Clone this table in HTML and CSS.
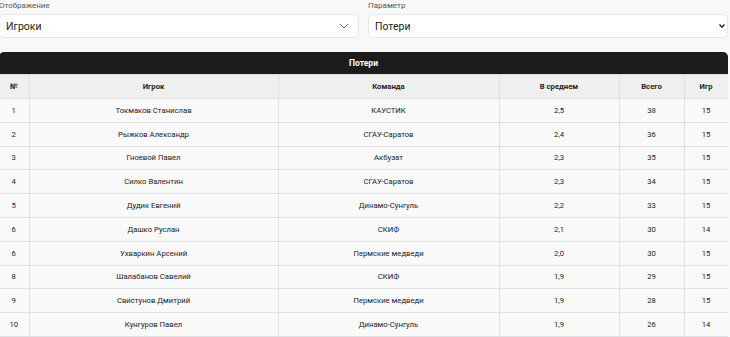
FILE: index.html
```html
<!DOCTYPE html>
<html lang="ru">
<head>
<meta charset="utf-8">
<link rel="stylesheet" href="styles.css">
</head>
<body>
<div class="page">
  <div class="filters">
    <div class="field">
      <div class="label">Отображение</div>
      <div class="select">
        <span>Игроки</span>
        <svg class="chev" width="10" height="6" viewBox="0 0 10 6"><path d="M1 1 L5 5 L9 1" fill="none" stroke="#666" stroke-width="1"/></svg>
      </div>
    </div>
    <div class="field">
      <div class="label">Параметр</div>
      <div class="select">
        <span>Потери</span>
        <svg class="chev2" width="6" height="4" viewBox="0 0 6 4"><path d="M0.5 0.5 L3 3.2 L5.5 0.5" fill="none" stroke="#222" stroke-width="1.4"/></svg>
      </div>
    </div>
  </div>
  <div class="card">
    <div class="title">Потери</div>
    <table class="stats">
      <colgroup>
        <col class="c1"><col class="c2"><col class="c3"><col class="c4"><col class="c5"><col class="c6">
      </colgroup>
      <thead>
        <tr><th>№</th><th>Игрок</th><th>Команда</th><th>В среднем</th><th>Всего</th><th>Игр</th></tr>
      </thead>
      <tbody>
        <tr><td>1</td><td>Токмаков Станислав</td><td>КАУСТИК</td><td>2,5</td><td>38</td><td>15</td></tr>
        <tr><td>2</td><td>Рыжков Александр</td><td>СГАУ-Саратов</td><td>2,4</td><td>36</td><td>15</td></tr>
        <tr><td>3</td><td>Гноевой Павел</td><td>Акбузат</td><td>2,3</td><td>35</td><td>15</td></tr>
        <tr><td>4</td><td>Силко Валентин</td><td>СГАУ-Саратов</td><td>2,3</td><td>34</td><td>15</td></tr>
        <tr><td>5</td><td>Дудик Евгений</td><td>Динамо-Сунгуль</td><td>2,2</td><td>33</td><td>15</td></tr>
        <tr><td>6</td><td>Дашко Руслан</td><td>СКИФ</td><td>2,1</td><td>30</td><td>14</td></tr>
        <tr><td>6</td><td>Ухваркин Арсений</td><td>Пермские медведи</td><td>2,0</td><td>30</td><td>15</td></tr>
        <tr><td>8</td><td>Шалабанов Савелий</td><td>СКИФ</td><td>1,9</td><td>29</td><td>15</td></tr>
        <tr><td>9</td><td>Свистунов Дмитрий</td><td>Пермские медведи</td><td>1,9</td><td>28</td><td>15</td></tr>
        <tr><td>10</td><td>Кунгуров Павел</td><td>Динамо-Сунгуль</td><td>1,9</td><td>26</td><td>14</td></tr>
      </tbody>
    </table>
  </div>
</div>
</body>
</html>
```

FILE: styles.css
```css
html, body {
  margin: 0;
  padding: 0;
  background: #f8f8f8;
  font-family: Roboto, "Noto Sans", sans-serif;
  color: #222;
}
.page {
  width: 729px;
  margin-left: -1px;
  overflow: hidden;
}
.filters {
  display: grid;
  grid-template-columns: 360px 360px;
  column-gap: 9px;
}
.label {
  font-size: 8px;
  line-height: 10px;
  color: #555;
  padding-top: 1px;
  height: 14px;
  box-sizing: border-box;
}
.select {
  height: 24px;
  box-sizing: border-box;
  background: #fff;
  border: 1px solid #e6e6e6;
  border-radius: 5px;
  display: flex;
  align-items: center;
  justify-content: space-between;
  padding: 0 9px 0 6px;
  font-size: 10.5px;
  color: #222;
}
.select .chev2 { margin-right: -7px; }
.card {
  margin-top: 14px;
}
.title {
  height: 22px;
  background: #1c1c1c;
  border-radius: 5px 5px 0 0;
  color: #fff;
  font-weight: 700;
  font-size: 8.5px;
  display: flex;
  align-items: center;
  justify-content: center;
}
.stats {
  width: 729px;
  border-collapse: collapse;
  table-layout: fixed;
  font-size: 7.7px;
}
.c1 { width: 30px; }
.c2 { width: 249px; }
.c3 { width: 221px; }
.c4 { width: 120px; }
.c5 { width: 65px; }
.c6 { width: 44px; }
.stats th, .stats td {
  text-align: center;
  border: 1px solid #dde1e4;
  padding: 0;
}
.stats th {
  height: 23px;
  background: #efefef;
  font-weight: 700;
  color: #222;
}
.stats td {
  height: 22.8px;
  background: #f9f9f9;
  color: #222;
}
.stats tr > :first-child { border-left: none; }
```
